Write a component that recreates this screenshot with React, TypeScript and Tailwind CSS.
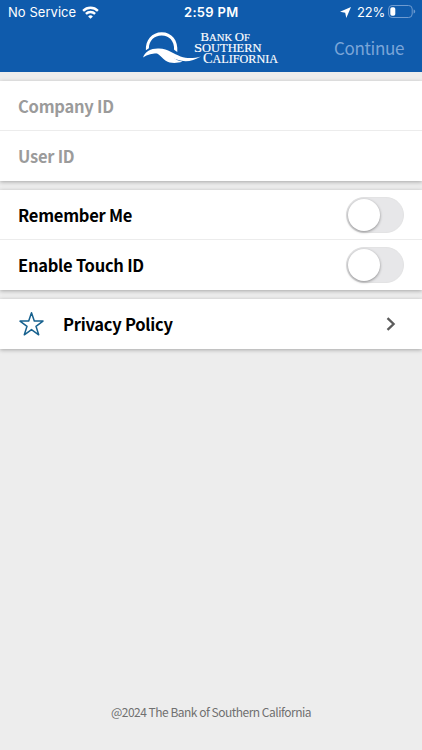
import { useState } from 'react';

const SOURCE = "font-['Noto_Sans_CJK_SC','Open_Sans',sans-serif]";

function WifiIcon() {
  return (
    <svg width="17" height="13" viewBox="0 0 17 13" fill="none" stroke="white" strokeWidth="2.4">
      <path d="M1.1 4.8a10.6 10.6 0 0 1 14.8 0" />
      <path d="M3.9 7.9a6.6 6.6 0 0 1 9.2 0" />
      <path d="M8.5 12.8 6.1 10.4a3.4 3.4 0 0 1 4.8 0z" fill="white" stroke="none" />
    </svg>
  );
}

function StatusBar() {
  return (
    <div className="grid h-6 grid-cols-[1fr_auto_1fr] items-center pl-2 pr-[6px] font-[Inter,sans-serif] text-[13px] leading-6 text-white">
      <div className="flex items-center">
        <span className="w-[74px] whitespace-nowrap tracking-[0.05px]">No Service</span>
        <WifiIcon />
      </div>
      <span className="w-[56px] whitespace-nowrap text-[13px] font-semibold tracking-[0.3px]">2:59 PM</span>
      <div className="flex items-center justify-end">
        <svg width="11" height="11" viewBox="0 0 11 11" className="mr-1.5">
          <path d="M11 0 6.3 11 5.2 5.8 0 4.7z" fill="white" />
        </svg>
        <span className="mr-1 w-[27px] whitespace-nowrap tracking-[-0.2px]">22%</span>
        <svg width="28" height="14" viewBox="0 0 28 14">
          <rect x="0.6" y="0.5" width="23.6" height="12" rx="3.5" fill="none" stroke="#6f9bd0" />
          <rect x="2.3" y="2.2" width="5" height="8.6" rx="1.7" fill="white" />
          <path d="M25.6 4.6v4c1-.4 1.6-1.1 1.6-2s-.6-1.6-1.6-2z" fill="#6f9bd0" />
        </svg>
      </div>
    </div>
  );
}

function Logo() {
  return (
    <svg width="136" height="34" viewBox="0 0 136 34" fill="white">
      <path d="M2.9 19.3C2.2 9.2 9 1.2 18.7 1.2c10 0 16.7 8 15.6 19.8l-3.2-2.2C31.5 10.1 26.2 4.6 18.7 4.6 11.2 4.6 5.9 10 5.9 17.3z" />
      <path d="M0 26.5C2.5 20 8 17.3 16 17.6c9.500.4 14.500 5.600 21.500 7.800 7 2.200 13 1.900 20.500 0C51 29.400 45 31 38.500 29.800 29.500 28 24 22.200 16 22.200 9.500 22.200 4.500 23.300 0 26.500z" />
      <path d="M11 21c9-.5 15 2 19.500 5.500 2.800 2.400 5 3.600 9 4.100-6.500 2.200-12.500 1.800-16.800-.8-3.200-2.200-6.200-6.900-11.700-8.800z" />
      <g fontFamily="'Liberation Serif', serif" stroke="white" strokeWidth="0.15">
        <text x="57.5" y="10.4" fontSize="10.8" textLength="49.5" lengthAdjust="spacingAndGlyphs"><tspan fontSize="13">B</tspan>ANK <tspan fontSize="13">O</tspan>F</text>
        <text x="51" y="21" fontSize="11.5" textLength="67.5" lengthAdjust="spacingAndGlyphs"><tspan fontSize="13.5">S</tspan>OUTHERN</text>
        <text x="60" y="31.7" fontSize="11.8" textLength="75" lengthAdjust="spacingAndGlyphs"><tspan fontSize="14">C</tspan>ALIFORNIA</text>
      </g>
    </svg>
  );
}

function Field({ label, divider }: { label: string; divider?: boolean }) {
  return (
    <div className={`h-[50px] ${divider ? 'border-b border-[#ececec]' : ''}`}>
      <input
        aria-label={label}
        placeholder={label}
        className="block h-[49px] w-full px-[18px] text-[16.5px] font-bold tracking-[-0.25px] outline-none placeholder:text-[#9b9b9b] placeholder:opacity-100"
      />
    </div>
  );
}

function ToggleRow({ label, divider }: { label: string; divider?: boolean }) {
  const [on, setOn] = useState(false);
  return (
    <div className={`flex h-[50px] items-center justify-between pl-[18px] pr-[18px] ${divider ? 'border-b border-[#ececec]' : ''}`}>
      <span className="text-[16.5px] font-bold leading-6 tracking-[-0.25px]">{label}</span>
      <button
        role="switch"
        aria-checked={on}
        aria-label={label}
        onClick={() => setOn(!on)}
        className={`flex h-9 w-[58px] items-center rounded-full border border-[#e3e3e4] p-px ${on ? 'justify-end bg-[#0f5bac]' : 'bg-[#e7e7e9]'}`}
      >
        <span className="size-8 rounded-full bg-white shadow-[0_1px_3px_rgba(0,0,0,0.4)]" />
      </button>
    </div>
  );
}

const CARD = 'bg-white shadow-[0_1px_4px_rgba(0,0,0,0.3)]';

export default function App() {
  return (
    <main className={`flex h-[750px] w-full flex-col bg-[#ededed] text-black ${SOURCE}`}>
      <header className="h-[72px] bg-[#0f5bac]">
        <StatusBar />
        <div className="grid h-12 grid-cols-[1fr_auto_1fr] items-center pr-[18px]">
          <span />
          <div className="pl-[17px]"><Logo /></div>
          <button className="justify-self-end text-[17px] leading-6 tracking-[-0.35px] text-[#7aa5d8]">Continue</button>
        </div>
      </header>
      <div className="flex flex-col gap-[9px] pt-[9px]">
        <section className={CARD}>
          <Field label="Company ID" divider />
          <Field label="User ID" />
        </section>
        <section className={CARD}>
          <ToggleRow label="Remember Me" divider />
          <ToggleRow label="Enable Touch ID" />
        </section>
        <section className={`flex h-[50px] items-center pl-[18px] pr-[26px] ${CARD}`}>
          <svg width="27" height="26" viewBox="0 0 27 26" fill="none" stroke="#17618e" strokeWidth="1.5" strokeLinejoin="round">
            <path d="M13.5 1.8 16.3 10.1H25L18 15.3 20.7 23.8 13.5 18.6 6.3 23.8 9 15.3 2 10.1h8.7z" />
          </svg>
          <span className="ml-[18px] flex-1 text-[16.5px] font-bold leading-6 tracking-[-0.27px]">Privacy Policy</span>
          <svg width="10" height="14" viewBox="0 0 10 14" fill="none" stroke="#5b5b5b" strokeWidth="2.3">
            <path d="M1.5 1.2 7.6 7 1.5 12.8" />
          </svg>
        </section>
      </div>
      <footer className="mt-auto pb-7 text-center text-[12px] leading-5 tracking-[-0.5px] text-[#707070]">@2024 The Bank of Southern California</footer>
    </main>
  );
}
